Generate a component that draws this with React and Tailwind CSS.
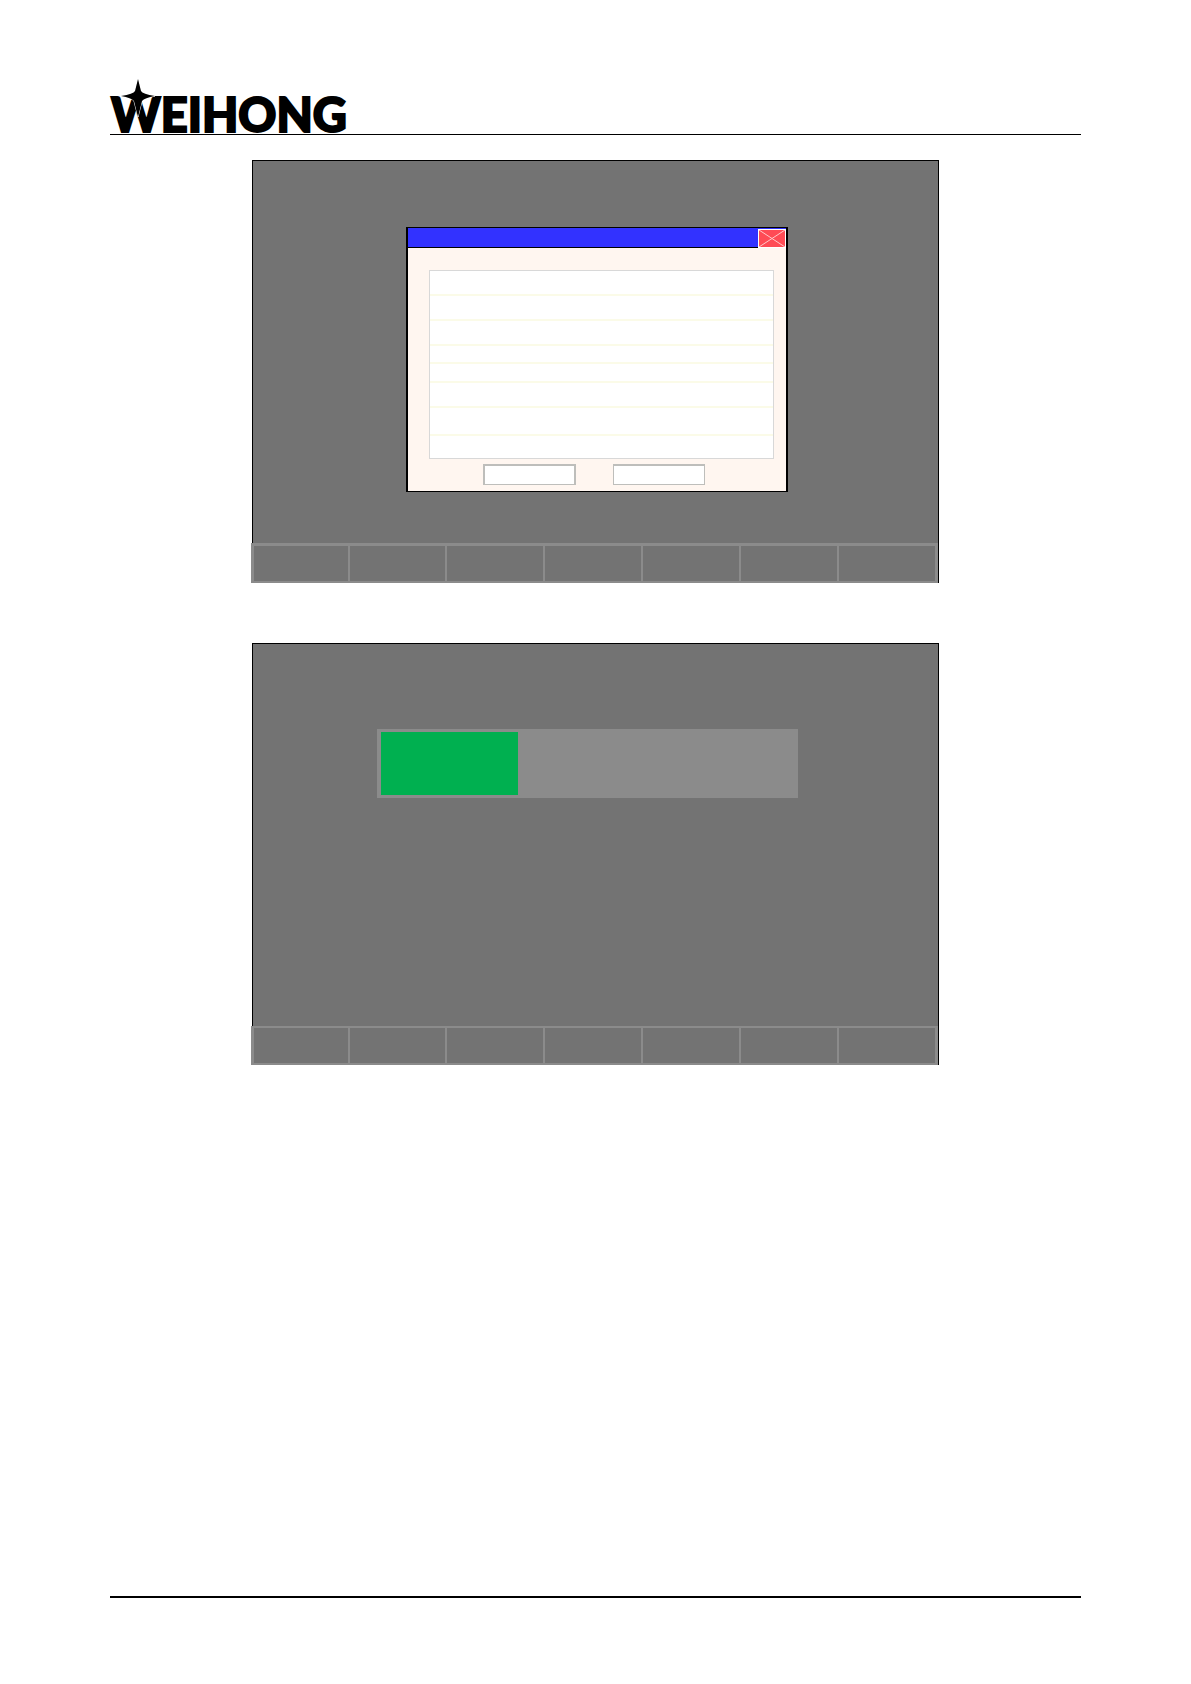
import React from 'react';

const softKeys = ['F1', 'F2', 'F3', 'F4', 'F5', 'F6', 'F7'];

const rows = ['h-[25px]', 'h-[25px]', 'h-[25px]', 'h-[18px]', 'h-[19px]', 'h-[25px]', 'h-7'];

const Logo = () => (
  <svg
    width="240"
    height="56"
    viewBox="0 0 240 56"
    role="img"
    aria-label="Weihong"
    className="block overflow-visible"
  >
    <text x="1" y="54" fontFamily="Lato, sans-serif" fontWeight="900" fontSize="47" stroke="#000" strokeWidth="2">
      WEIHONG
    </text>
    {/* Four-point star over the W */}
    <path
      d="M28 1 L31 13 Q32.500 16 45 18 Q34.500 20 32 23 L28 39 L24 23 Q21.500 20 11 18 Q23.500 16 25 13 Z"
      fill="#000"
      stroke="#fff"
      strokeWidth="1"
      paintOrder="stroke"
    />
  </svg>
);

const SoftKeys = ({ className }) => (
  <div
    className={`mt-auto -ml-0.5 grid grid-cols-[97fr_97fr_98fr_98fr_98fr_98fr_98fr] border-b-2 border-r-[3px] border-[#8b8b8b] ${className}`}
  >
    {softKeys.map((key) => (
      <button
        key={key}
        type="button"
        aria-label={key}
        className="border-l-2 border-[#8b8b8b] bg-[#737373] first:border-l-[3px]"
      />
    ))}
  </div>
);

const Screen = ({ className, children }) => (
  <section
    className={`mx-auto flex w-full max-w-[687px] flex-col border-x border-t border-black bg-[#737373] ${className}`}
  >
    {children}
  </section>
);

const Dialog = () => (
  <div
    role="dialog"
    aria-label="Message"
    className="mt-[66px] ml-[153px] mr-[150px] border-x-2 border-y border-black bg-[#fff6f0]"
  >
    {/* Title bar */}
    <div className="flex h-5">
      <div className="flex-1 border-b border-black bg-[#3232ff]" />
      <button
        type="button"
        aria-label="Close"
        className="w-7 border-t border-[#3232ff] bg-white p-px"
      >
        <svg viewBox="0 0 26 17" preserveAspectRatio="none" className="block h-full w-full bg-[#ff4b55]">
          <path d="M0 0 L26 17 M26 0 L0 17" stroke="#ffc8c8" strokeWidth="1" />
        </svg>
      </button>
    </div>

    {/* List */}
    <ul className="mt-[22px] ml-[21px] mr-3 h-[189px] border border-[#d8d8d8] bg-white">
      {rows.map((height, i) => (
        <li key={i} className={`border-b-2 border-[#fbfbe8] ${height}`} />
      ))}
    </ul>

    {/* Actions */}
    <div className="mt-[5px] mb-1.5 ml-[75px] flex gap-[37px]">
      <button type="button" aria-label="OK" className="h-[21px] w-[93px] border-2 border-b border-[#bebebb] bg-white" />
      <button type="button" aria-label="Cancel" className="h-[21px] w-[92px] border border-t-2 border-[#bebebb] bg-white" />
    </div>
  </div>
);

const ProgressBar = ({ value }) => (
  <div
    role="progressbar"
    aria-label="Progress"
    aria-valuenow={value}
    className="mt-[85px] ml-[124px] mr-[140px] h-[69px] bg-[#8b8b8b] pt-[3px] pr-0.5 pb-[3px] pl-1"
  >
    <div className="h-full bg-[#00b050]" style={{ width: `${value}%` }} />
  </div>
);

const App = () => {
  return (
    <div className="flex min-h-screen flex-col bg-white px-[110px] pt-[78px] pb-[86px]">
      <header className="border-b border-black">
        <Logo />
      </header>

      <main className="mt-[25px] mb-10 flex flex-col gap-[60px]">
        <Screen className="min-h-[423px]">
          <Dialog />
          <SoftKeys className="h-10 border-t-[3px]" />
        </Screen>

        <Screen className="min-h-[422px]">
          <ProgressBar value={33} />
          <SoftKeys className="h-[39px] border-t-2" />
        </Screen>
      </main>

      <footer className="mt-auto border-t-2 border-black" />
    </div>
  );
};

export default App;
